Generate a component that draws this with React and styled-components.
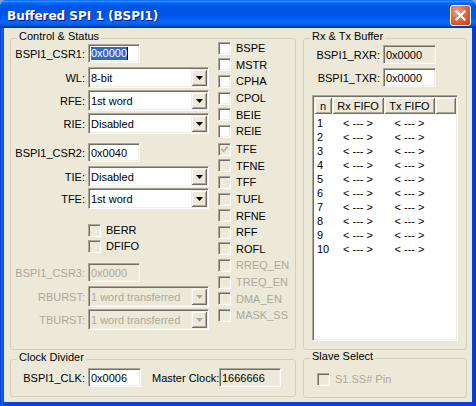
import React from "react";
import styled, { createGlobalStyle, css } from "styled-components";

const GlobalStyle = createGlobalStyle`
  html, body {
    margin: 0;
    padding: 0;
    background: #7a9fd8;
  }
  body {
    font-family: "Liberation Sans", Arial, sans-serif;
    font-size: 11px;
    color: #000;
  }
  * {
    box-sizing: border-box;
  }
`;

const sunken = css`
  border: 1px solid;
  border-color: #aca899 #fff #fff #aca899;
  box-shadow: inset 1px 1px #716f64, inset -1px -1px #f1efe2;
`;

const raised = css`
  box-shadow: inset 1px 1px #f1efe2, inset -1px -1px #716f64,
    inset 2px 2px #fff, inset -2px -2px #aca899;
`;

const Window = styled.div`
  width: 476px;
  height: 406px;
  display: flex;
  flex-direction: column;
  background: linear-gradient(to right, #0831d9 0, #166aee 2px, #0843d8 4px, #0843d8 calc(100% - 4px), #0831d9 100%);
  border-radius: 7px 7px 0 0;
  overflow: hidden;
`;

const TitleBar = styled.div`
  height: 28px;
  flex: none;
  display: flex;
  align-items: center;
  justify-content: space-between;
  padding: 3px 5px 0 7px;
  background: linear-gradient(
    to bottom,
    #0058ee 0%,
    #3593ff 4%,
    #288eff 6%,
    #127dff 8%,
    #036ffc 10%,
    #0262ee 14%,
    #0057e5 20%,
    #0054e3 24%,
    #0055eb 56%,
    #005bf5 66%,
    #026afe 76%,
    #0062ef 86%,
    #0052d6 92%,
    #0040ab 96%,
    #003092 100%
  );
`;

const Title = styled.span`
  color: #fff;
  font-family: "DejaVu Sans", "Liberation Sans", sans-serif;
  font-weight: bold;
  font-size: 12px;
  margin-top: 1px;
  text-shadow: 1px 1px #0a1883;
`;

const CloseButton = styled.div`
  width: 21px;
  height: 21px;
  border: 1px solid #fff;
  border-radius: 3px;
  display: flex;
  align-items: center;
  justify-content: center;
  background: radial-gradient(circle at 35% 30%, #f3a287 0, #e2683f 45%, #c23c17 100%);
`;

const Body = styled.div`
  flex: 1;
  margin: 0 4px 4px;
  background: #ece9d8;
  padding: 10px 5px 4px 6px;
  display: flex;
  gap: 7px;
`;

const Column = styled.div`
  width: ${(p) => p.$w}px;
  display: flex;
  flex-direction: column;
`;

const Group = styled.div`
  position: relative;
  border: 1px solid #d0d0bf;
  border-radius: 3px;
  flex: ${(p) => (p.$grow ? 1 : "none")};
  height: ${(p) => (p.$h ? `${p.$h}px` : "auto")};
  margin-top: ${(p) => p.$mt || 0}px;
  margin-bottom: ${(p) => p.$mb || 0}px;
  display: flex;
  flex-direction: column;
`;

const Caption = styled.span`
  position: absolute;
  top: -9px;
  left: 6px;
  padding: 0 2px;
  line-height: 13px;
  background: #ece9d8;
`;

const ControlBody = styled.div`
  display: flex;
  gap: 9px;
`;

const FormCol = styled.div`
  width: 198px;
  display: flex;
  flex-direction: column;
`;

const CheckCol = styled.div`
  display: flex;
  flex-direction: column;
  padding-top: 1px;
`;

const CheckGroup = styled.div`
  display: flex;
  flex-direction: column;
  margin-top: ${(p) => p.$mt || 0}px;
`;

const Row = styled.div`
  display: flex;
  align-items: center;
  margin-top: ${(p) => p.$mt || 0}px;
  padding-left: ${(p) => p.$pl || 0}px;
  color: ${(p) => (p.$disabled ? "#aca899" : "#000")};
`;

const Label = styled.span`
  width: ${(p) => p.$w}px;
  margin-left: ${(p) => p.$ml || 0}px;
  margin-right: 3px;
  text-align: right;
  white-space: nowrap;
`;

const TextBox = styled.div`
  ${sunken};
  width: ${(p) => p.$w}px;
  height: 19px;
  padding: 0 2px;
  display: flex;
  align-items: center;
  background: ${(p) => (p.$flat ? "#ece9d8" : "#fff")};
  color: ${(p) => (p.$disabled ? "#aca899" : "#000")};
`;

const Selected = styled.span`
  background: #316ac5;
  color: #fff;
  line-height: 13px;
`;

const Caret = styled.span`
  width: 1px;
  height: 13px;
  background: #000;
`;

const Combo = styled.div`
  ${sunken};
  width: 121px;
  height: 21px;
  padding: 1px 1px 1px 2px;
  display: flex;
  align-items: center;
  background: ${(p) => (p.$disabled ? "#ece9d8" : "#fff")};
  color: ${(p) => (p.$disabled ? "#aca899" : "#000")};
`;

const ComboText = styled.span`
  flex: 1;
  white-space: nowrap;
`;

const ComboButton = styled.span`
  width: 16px;
  height: 17px;
  ${raised};
  background: #ece9d8;
  display: flex;
  align-items: center;
  justify-content: center;
`;

const CheckRow = styled.div`
  display: flex;
  align-items: center;
  gap: 5px;
  height: ${(p) => p.$h || 16}px;
  margin-top: ${(p) => p.$mt || 0}px;
  padding-left: ${(p) => p.$pl || 0}px;
  color: ${(p) => (p.$disabled ? "#aca899" : "#000")};
`;

const Box = styled.span`
  width: 13px;
  height: 13px;
  flex: none;
  ${sunken};
  background: ${(p) => (p.$grey ? "#ece9d8" : "#fff")};
  display: flex;
  align-items: center;
  justify-content: center;
`;

const BufferBody = styled.div`
  flex: 1;
  display: flex;
  flex-direction: column;
`;

const List = styled.div`
  ${sunken};
  flex: 1;
  margin: 8px;
  padding: 1px;
  background: #fff;
  display: flex;
  flex-direction: column;
`;

const ListHeader = styled.div`
  height: 17px;
  display: flex;
  flex: none;
`;

const HeaderCell = styled.div`
  width: ${(p) => (p.$w ? `${p.$w}px` : "auto")};
  flex: ${(p) => (p.$w ? "none" : 1)};
  ${raised};
  background: #ece9d8;
  display: flex;
  align-items: center;
  justify-content: center;
`;

const ListRows = styled.div`
  padding-top: 2px;
`;

const ListRow = styled.div`
  height: 14px;
  display: flex;
  align-items: center;
`;

const Cell = styled.span`
  width: ${(p) => p.$w}px;
  padding-left: ${(p) => (p.$center ? 0 : 3)}px;
  text-align: ${(p) => (p.$center ? "center" : "left")};
  white-space: nowrap;
`;

const Arrow = ({ color }) => (
  <svg width="7" height="4" viewBox="0 0 7 4">
    <polygon points="0,0 7,0 3.5,4" fill={color} />
  </svg>
);

const Check = () => (
  <svg width="7" height="7" viewBox="0 0 7 7">
    <polyline points="0.5,3 2.5,5.2 6.5,1" fill="none" stroke="#aca899" strokeWidth="1.6" />
  </svg>
);

const Field = ({ label, value, mt, disabled }) => (
  <Row $mt={mt} $disabled={disabled}>
    <Label $w={74}>{label}</Label>
    <TextBox $w={52} $flat={disabled} $disabled={disabled}>
      {value}
    </TextBox>
  </Row>
);

const Select = ({ label, value, mt, disabled }) => (
  <Row $mt={mt} $disabled={disabled}>
    <Label $w={74}>{label}</Label>
    <Combo $disabled={disabled}>
      <ComboText>{value}</ComboText>
      <ComboButton>
        <Arrow color={disabled ? "#aca899" : "#000"} />
      </ComboButton>
    </Combo>
  </Row>
);

const CheckBox = ({ label, grey, checked, disabled, h, mt, pl }) => (
  <CheckRow $disabled={disabled} $h={h} $mt={mt} $pl={pl}>
    <Box $grey={grey || disabled}>{checked && <Check />}</Box>
    {label}
  </CheckRow>
);

const flagsA = ["BSPE", "MSTR", "CPHA", "CPOL", "BEIE", "REIE"];
const flagsB = ["TFE", "TFNE", "TFF", "TUFL", "RFNE", "RFF", "ROFL"];
const flagsC = ["RREQ_EN", "TREQ_EN", "DMA_EN", "MASK_SS"];
const fifo = Array.from({ length: 10 }, (_, i) => i + 1);

export default function App() {
  return (
    <>
      <GlobalStyle />
      <Window>
        <TitleBar>
          <Title>Buffered SPI 1 (BSPI1)</Title>
          <CloseButton>
            <svg width="11" height="11" viewBox="0 0 11 11">
              <path d="M1.5 1.5 L9.5 9.5 M9.5 1.5 L1.5 9.5" stroke="#fff" strokeWidth="2.2" strokeLinecap="square" />
            </svg>
          </CloseButton>
        </TitleBar>
        <Body>
          <Column $w={286}>
            <Group $grow>
              <Caption>Control &amp; Status</Caption>
              <ControlBody>
                <FormCol>
                  <Row $mt={5}>
                    <Label $w={74}>BSPI1_CSR1:</Label>
                    <TextBox $w={52}>
                      <Selected>0x0000</Selected>
                      <Caret />
                    </TextBox>
                  </Row>
                  <Select label="WL:" value="8-bit" mt={4} />
                  <Select label="RFE:" value="1st word" mt={2} />
                  <Select label="RIE:" value="Disabled" mt={2} />
                  <Field label="BSPI1_CSR2:" value="0x0040" mt={9} />
                  <Select label="TIE:" value="Disabled" mt={4} />
                  <Select label="TFE:" value="1st word" mt={1} />
                  <CheckBox label="BERR" grey mt={13} pl={77} />
                  <CheckBox label="DFIFO" grey pl={77} />
                  <Field label="BSPI1_CSR3:" value="0x0000" mt={9} disabled />
                  <Select label="RBURST:" value="1 word transferred" mt={4} disabled />
                  <Select label="TBURST:" value="1 word transferred" mt={2} disabled />
                </FormCol>
                <CheckCol>
                  <CheckGroup>
                    {flagsA.map((f) => (
                      <CheckBox key={f} label={f} h={16.6} />
                    ))}
                  </CheckGroup>
                  <CheckGroup $mt={1.4}>
                    {flagsB.map((f) => (
                      <CheckBox key={f} label={f} h={16.6} grey checked={f === "TFE"} />
                    ))}
                    {flagsC.map((f) => (
                      <CheckBox key={f} label={f} h={16.6} disabled />
                    ))}
                  </CheckGroup>
                </CheckCol>
              </ControlBody>
            </Group>
            <Group $h={38} $mt={9} $mb={1}>
              <Caption>Clock Divider</Caption>
              <Row $mt={8}>
                <Label $w={74}>BSPI1_CLK:</Label>
                <TextBox $w={53}>0x0006</TextBox>
                <Label $w={64} $ml={11}>
                  Master Clock:
                </Label>
                <TextBox $w={62} $flat>
                  1666666
                </TextBox>
              </Row>
            </Group>
          </Column>
          <Column $w={164}>
            <Group $grow>
              <Caption>Rx &amp; Tx Buffer</Caption>
              <BufferBody>
                <Row $mt={6}>
                  <Label $w={76}>BSPI1_RXR:</Label>
                  <TextBox $w={53} $flat>
                    0x0000
                  </TextBox>
                </Row>
                <Row $mt={4}>
                  <Label $w={76}>BSPI1_TXR:</Label>
                  <TextBox $w={53}>0x0000</TextBox>
                </Row>
                <List>
                  <ListHeader>
                    <HeaderCell $w={18}>n</HeaderCell>
                    <HeaderCell $w={52}>Rx FIFO</HeaderCell>
                    <HeaderCell $w={51}>Tx FIFO</HeaderCell>
                    <HeaderCell />
                  </ListHeader>
                  <ListRows>
                    {fifo.map((n) => (
                      <ListRow key={n}>
                        <Cell $w={18}>{n}</Cell>
                        <Cell $w={52} $center>
                          {"< --- >"}
                        </Cell>
                        <Cell $w={51} $center>
                          {"< --- >"}
                        </Cell>
                      </ListRow>
                    ))}
                  </ListRows>
                </List>
              </BufferBody>
            </Group>
            <Group $h={40} $mt={8}>
              <Caption>Slave Select</Caption>
              <CheckBox label="S1.SS# Pin" disabled mt={12} pl={13} />
            </Group>
          </Column>
        </Body>
      </Window>
    </>
  );
}
